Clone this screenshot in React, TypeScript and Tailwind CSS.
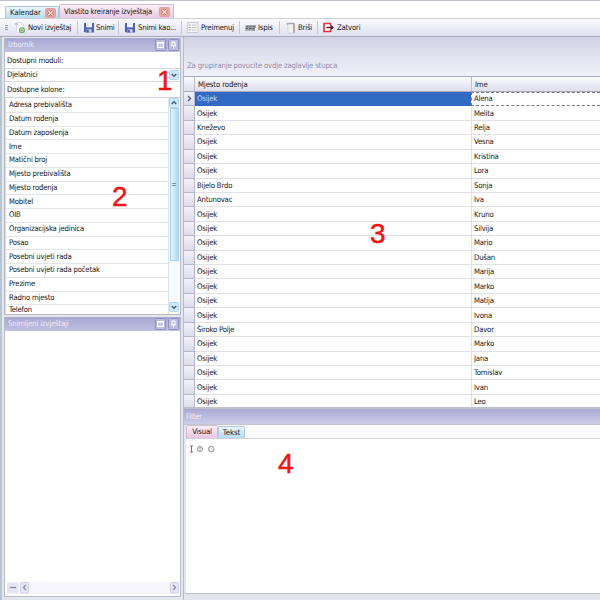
import React from 'react';

const columns = [
  'Adresa prebivališta', 'Datum rođenja', 'Datum zaposlenja', 'Ime', 'Matični broj', 'Mjesto prebivališta',
  'Mjesto rođenja', 'Mobitel', 'OIB', 'Organizacijska jedinica', 'Posao', 'Posebni uvjeti rada',
  'Posebni uvjeti rada početak', 'Prezime', 'Radno mjesto', 'Telefon',
];

const people = [
  ['Osijek', 'Alena'], ['Osijek', 'Melita'], ['Kneževo', 'Relja'], ['Osijek', 'Vesna'], ['Osijek', 'Kristina'],
  ['Osijek', 'Lora'], ['Bijelo Brdo', 'Sonja'], ['Antunovac', 'Iva'], ['Osijek', 'Kruno'], ['Osijek', 'Silvija'],
  ['Osijek', 'Mario'], ['Osijek', 'Dušan'], ['Osijek', 'Marija'], ['Osijek', 'Marko'], ['Osijek', 'Matija'],
  ['Osijek', 'Ivona'], ['Široko Polje', 'Davor'], ['Osijek', 'Marko'], ['Osijek', 'Jana'], ['Osijek', 'Tomislav'],
  ['Osijek', 'Ivan'], ['Osijek', 'Leo'],
];

const CloseBox = () => (
  <svg width="11" height="10" viewBox="0 0 11 10" className="shrink-0">
    <rect x="0.5" y="0.5" width="10" height="9" rx="1" fill="#e9a79f" stroke="#d9a3a8" />
    <path d="M3 2.5l5 5M8 2.5l-5 5" stroke="#cf6353" strokeWidth="2.6" />
    <path d="M3.2 2.7l4.6 4.6M7.8 2.7L3.2 7.3" stroke="#fff" strokeWidth="1.2" />
  </svg>
);

const NewIcon = () => (
  <svg width="12" height="12" viewBox="0 0 12 12" className="shrink-0">
    <path d="M2.5 0.5h5l2 2v8h-7z" fill="#f8f8fb" stroke="#dcdce2" />
    <path d="M1 2h3" stroke="#9fb39c" />
    <circle cx="8" cy="8.3" r="2.4" fill="#e2f0df" stroke="#78ad76" strokeWidth="1.3" />
    <path d="M6.7 8.3h2.6M8 7v2.6" stroke="#5fa35f" strokeWidth="0.8" />
  </svg>
);

const SaveIcon = () => (
  <svg width="10" height="11" viewBox="0 0 10 11" className="shrink-0">
    <path d="M0 1h10v9.5H1.2L0 9.3z" fill="#4d62b0" />
    <path d="M2 1h6v4.4H2z" fill="#eef2fc" />
    <path d="M2.6 7.2h5v3.3h-5z" fill="#c4cce6" />
    <path d="M3.2 7.8h1.4v2.7H3.2z" fill="#33427f" />
  </svg>
);

const RenameIcon = () => (
  <svg width="12" height="11" viewBox="0 0 12 11" className="shrink-0">
    <rect x="0.5" y="0.5" width="10.5" height="10" fill="#f4f5f6" stroke="#c9cdd2" />
    <path d="M2 3h1.5M2 5.5h1.5M2 8h1.5" stroke="#9aa7a8" />
    <path d="M4.7 3h4.8M4.7 5.5h4.8M4.7 8h4.8" stroke="#c0c8c8" />
  </svg>
);

const PrintIcon = () => (
  <svg width="11" height="9" viewBox="0 0 11 9" className="shrink-0">
    <path d="M0.5 2h10.5v3H10v3H0.5z" fill="#a3a3a9" />
    <path d="M1 3.5h2.5M4.5 3.5h2M7.5 3.5h2.5" stroke="#77777f" />
    <path d="M0.5 5.5h2.5M4 5.5h2.5M7.5 5.5h2" stroke="#66666e" strokeWidth="1.3" />
    <path d="M2 7.3h1.5M5 7.3h1.5" stroke="#d0d0d8" />
  </svg>
);

const TrashIcon = () => (
  <svg width="10" height="12" viewBox="0 0 10 12" className="shrink-0">
    <path d="M1.3 2h7l-.4 9.2H2.4z" fill="#f0f0f3" stroke="#cfcfd5" strokeWidth="0.8" />
    <path d="M0.3 1.8h2.2M2.5 1.3h5.5" stroke="#94949c" />
    <path d="M8 1.5v9.3" stroke="#8a8a94" strokeWidth="1.2" />
  </svg>
);

const ExitIcon = () => (
  <svg width="12" height="11" viewBox="0 0 12 11" className="shrink-0">
    <path d="M7.5 3.3V1.5H1v8h6.5V7.7" fill="#fff" stroke="#d83540" strokeWidth="1.6" />
    <path d="M3.5 4.7h4V2.6l3.6 2.9-3.6 2.9V6.3h-4z" fill="#572028" />
  </svg>
);

const ToolSep = () => <div className="h-[13px] w-px shrink-0 bg-[#c6c6d6]" />;

const PanelHeader = ({ title }: { title: string }) => (
  <div className="flex h-[14px] shrink-0 items-center bg-linear-to-b from-[#a8a8d2] to-[#c0c0e2] pr-[1px] pl-[3px] text-[#ececf9]">
    <span>{title}</span>
    <svg width="24" height="12" viewBox="0 0 24 12" className="ml-auto">
      <rect x="0.5" y="0.5" width="10" height="11" rx="1" fill="#bdbde0" stroke="#8f8fc0" />
      <rect x="2.5" y="3.5" width="6" height="5" fill="#c9c9e8" stroke="#fff" />
      <path d="M2 3.8h7" stroke="#fff" strokeWidth="1.7" />
      <rect x="13.5" y="0.5" width="10" height="11" rx="1" fill="#bdbde0" stroke="#8f8fc0" />
      <path d="M17 6.5V3h3v3.5M16 6.8h5M18.5 7v2.5" fill="none" stroke="#fff" />
    </svg>
  </div>
);

const ScrollCap = ({ up }: { up?: boolean }) => (
  <svg width="10" height="10" viewBox="0 0 10 10" className="shrink-0">
    <rect x="0.5" y="0.5" width="9" height="9" rx="1" fill="#cfe9f8" stroke="#b0d5ed" />
    <path d={up ? 'M2.7 6L5 3.8 7.3 6' : 'M2.7 4L5 6.2 7.3 4'} fill="none" stroke="#426080" strokeWidth="1.5" />
  </svg>
);

const App: React.FC = () => {
  return (
    <div className="relative flex h-[600px] w-[600px] flex-col overflow-hidden bg-[#e4e6ee] font-['DejaVu_Sans_Condensed','DejaVu_Sans',sans-serif] text-[7.7px] leading-[12px] tracking-[-0.19px] whitespace-nowrap text-[#161616]">
      {/* Document tabs */}
      <div className="flex h-[18px] shrink-0 items-end border-t border-[#c0c2c9] bg-white pl-[5px]">
        <div className="flex h-[12px] w-[54px] items-center justify-between rounded-t-[2px] border border-b-0 border-[#b5c5d9] bg-linear-to-b from-[#eaf6fd] to-[#b5dcf5] pr-[2px] pl-[4px]">
          <span className="tracking-[0.02px]">Kalendar</span>
          <CloseBox />
        </div>
        <div className="flex h-[14px] w-[115px] items-center justify-between rounded-t-[2px] border border-b-0 border-[#d2b9d0] bg-linear-to-b from-[#faeef6] to-[#ebc9e5] pr-[3px] pl-[4px]">
          <span>Vlastito kreiranje izvještaja</span>
          <CloseBox />
        </div>
      </div>

      {/* Toolbar */}
      <div className="flex h-[19px] shrink-0 items-center border-t border-b border-t-[#d0d0da] border-b-[#a9a9bb] bg-linear-to-b from-[#fafafe] to-[#e0e0ef] pl-[5px]">
        <div className="flex w-[9px] flex-col gap-[1px]">
          <i className="h-px w-[3px] bg-[#9a9aa8]" />
          <i className="h-px w-[3px] bg-[#9a9aa8]" />
          <i className="h-px w-[3px] bg-[#9a9aa8]" />
        </div>
        <div className="flex w-[63px] items-center gap-[2px]"><NewIcon /><span>Novi izvještaj</span></div>
        <ToolSep />
        <div className="flex w-[40px] items-center gap-[2px] pl-[6px]"><SaveIcon /><span>Snimi</span></div>
        <ToolSep />
        <div className="flex w-[62px] items-center gap-[3px] pl-[6px]"><SaveIcon /><span>Snimi kao...</span></div>
        <ToolSep />
        <div className="flex w-[57px] items-center gap-[2px] pl-[5px]"><RenameIcon /><span>Preimenuj</span></div>
        <ToolSep />
        <div className="flex w-[39px] items-center gap-[2px] pl-[5px]"><PrintIcon /><span>Ispis</span></div>
        <ToolSep />
        <div className="flex w-[37px] items-center gap-[2px] pl-[6px]"><TrashIcon /><span>Briši</span></div>
        <ToolSep />
        <div className="flex items-center gap-[2px] pl-[5px]"><ExitIcon /><span>Zatvori</span></div>
      </div>

      <div className="flex min-h-0 flex-1 border-l-2 border-[#b8c6d2] pl-[2px]">
        {/* Left column */}
        <div className="flex w-[177px] shrink-0 flex-col pt-px">
          <div className="flex h-[277px] shrink-0 flex-col border-x border-b border-[#b9bac8] bg-white">
            <PanelHeader title="Izbornik" />
            <div className="flex h-[17px] items-center border-b border-[#d7d9df] pt-px pl-[2px]">Dostupni moduli:</div>
            <div className="flex h-[13px] items-center justify-between border-b border-[#d7d9df] pr-px pl-[2px]">
              <span>Djelatnici</span>
              <ScrollCap />
            </div>
            <div className="flex h-[16px] shrink-0 items-center border-b border-[#ced1d8] pl-[2px]">Dostupne kolone:</div>
            <div className="mr-px flex min-h-0 flex-1 overflow-hidden border-l border-[#d8dae2]">
              <div className="flex-1 pt-px">
                {columns.map((c) => (
                  <div key={c} className="flex h-[13.75px] items-center border-b border-[#e5e6ea] pl-[3px] last:h-[9px] last:border-b-0 last:leading-[9px]">{c}</div>
                ))}
              </div>
              <div className="flex w-[11px] flex-col items-center border-l border-[#d9e6ef] bg-[#f7f9fc]">
                <ScrollCap up />
                <div className="flex h-[153px] w-[9px] flex-col items-center justify-center gap-px border border-[#a9cfe8] bg-linear-to-r from-[#e5f5fd] to-[#afd9f3]">
                  <i className="h-px w-[4px] bg-[#7892a8]" />
                  <i className="h-px w-[4px] bg-[#7892a8]" />
                </div>
                <div className="mt-auto mb-[2px] flex"><ScrollCap /></div>
              </div>
            </div>
          </div>
          <div className="mt-[2px] flex h-[280px] shrink-0 flex-col border-x border-b border-[#b9bac8] bg-white">
            <PanelHeader title="Snimljeni izvještaji" />
            <div className="m-[2px] mb-[2px] flex flex-1 items-end">
              <div className="flex h-[12px] flex-1 bg-[#f7f6fc]">
                <svg width="172" height="12" viewBox="0 0 172 12">
                  <rect x="0" y="0.5" width="11.5" height="10.5" rx="1" fill="#e5e5f1" />
                  <path d="M3 5.5h6" stroke="#8888a7" strokeWidth="1.3" />
                  <rect x="13.5" y="0.5" width="8" height="10.5" rx="1" fill="#e5e4f2" stroke="#d1d0e3" />
                  <path d="M19 3l-2.6 2.5L19 8" fill="none" stroke="#8a8ab0" strokeWidth="1.2" />
                  <rect x="163.5" y="0.5" width="8" height="10.5" rx="1" fill="#e5e4f2" stroke="#d1d0e3" />
                  <path d="M166 3l2.6 2.5L166 8" fill="none" stroke="#8a8ab0" strokeWidth="1.2" />
                </svg>
              </div>
            </div>
          </div>
        </div>

        {/* Grid and filter */}
        <div className="ml-[2px] flex min-w-0 flex-1 flex-col border-l border-[#b9bac8]">
          <div className="flex h-[370px] shrink-0 flex-col overflow-hidden">
            <div className="flex h-[39px] shrink-0 items-end bg-linear-to-b from-[#d2d2e4] to-[#f1f1fb] pb-[4px] pl-[3px] tracking-[-0.17px] text-[#8c8cad]">
              Za grupiranje povucite ovdje zaglavlje stupca
            </div>
            <div className="flex h-[16px] shrink-0 items-center border-y border-[#aaaabc] bg-linear-to-b from-[#fafafe] to-[#dfdfec]">
              <div className="h-full w-[11px] border-r border-[#bcbccd]" />
              <div className="w-[276px] pt-px pl-[3px] tracking-[-0.1px]">Mjesto rođenja</div>
              <div className="flex h-full flex-1 items-center border-l border-[#bcbccd] pt-px pl-[3px]">Ime</div>
            </div>
            <div className="min-h-0 flex-1 overflow-hidden bg-white">
              {people.map(([place, name], i) => (
                <div key={i} className="flex h-[14.43px] items-center">
                  <div className="flex h-full w-[11px] shrink-0 items-center justify-center border-r border-b border-[#b6b6cb] bg-linear-to-b from-[#f2f1fb] to-[#dcdbec]">
                    {i === 0 && (
                      <svg width="5" height="7" viewBox="0 0 5 7"><path d="M1 1l2.5 2.5L1 6" fill="none" stroke="#55557c" strokeWidth="1.3" /></svg>
                    )}
                  </div>
                  <div className={`flex h-full w-[276px] shrink-0 items-center border-b pt-px pl-[2px] ${i === 0 ? 'border-[#316ac5] bg-[#316ac5] text-[#c9daf5]' : 'border-[#e0e0e6]'}`}>{place}</div>
                  <div className={`flex h-full flex-1 items-center pl-[2px] ${i === 0 ? 'border border-r-0 border-dashed border-[#77777c]' : 'border-b border-l border-[#e0e0e6] pt-px'}`}>{name}</div>
                </div>
              ))}
            </div>
          </div>

          <div className="flex h-[18px] shrink-0 items-center border-t-2 border-b border-t-[#bebfc9] border-b-[#c4c4d2] bg-linear-to-b from-[#a9a9d4] to-[#cdcdea] pl-[2px] text-[#ececf9]">Filter</div>
          <div className="mb-[6px] flex flex-1 flex-col border-b border-l-2 border-b-[#bbbcca] border-l-[#e4e5ee] bg-white">
            <div className="flex h-[14px] shrink-0 items-end border-b border-[#d3d3df] bg-[#fbfbfe]">
              <div className="flex h-[13px] w-[32px] items-center justify-center rounded-t-[2px] border border-b-0 border-[#d3bdd3] bg-linear-to-b from-[#faeff8] to-[#ebc5e2]">Visual</div>
              <div className="flex h-[12px] w-[27px] items-center justify-center rounded-t-[2px] border border-b-0 border-[#afc9df] bg-linear-to-b from-[#e9f6fd] to-[#b2daf5] tracking-normal">Tekst</div>
            </div>
            <svg width="32" height="10" viewBox="0 0 32 10" className="mt-[5px] ml-[3px]">
              <path d="M1 2h3M1 8h3M2.5 2v6" stroke="#8e696c" />
              <circle cx="11" cy="5" r="2.7" fill="#f2f2f2" stroke="#aaa" />
              <path d="M8 5h6M9.5 3.5h3M9.5 6.5h3" stroke="#aaa" strokeWidth="0.7" />
              <circle cx="22.3" cy="5" r="2.7" fill="#fff" stroke="#aaa" strokeWidth="1.3" />
              <path d="M21 5h2.6M22.3 3.7v2.6" stroke="#ccc" strokeWidth="0.6" />
            </svg>
          </div>
        </div>
      </div>

      {/* Numbered callouts over the window */}
      <div className="font-['Liberation_Sans',Arial,sans-serif] text-[28px] leading-[28px] tracking-normal text-[#ed1515] [-webkit-text-stroke:0.5px_#ed1515]">
        <span className="absolute top-[67px] left-[157px]">1</span>
        <span className="absolute top-[183px] left-[112px]">2</span>
        <span className="absolute top-[220px] left-[370px]">3</span>
        <span className="absolute top-[450px] left-[278px]">4</span>
      </div>
    </div>
  );
};

export default App;
